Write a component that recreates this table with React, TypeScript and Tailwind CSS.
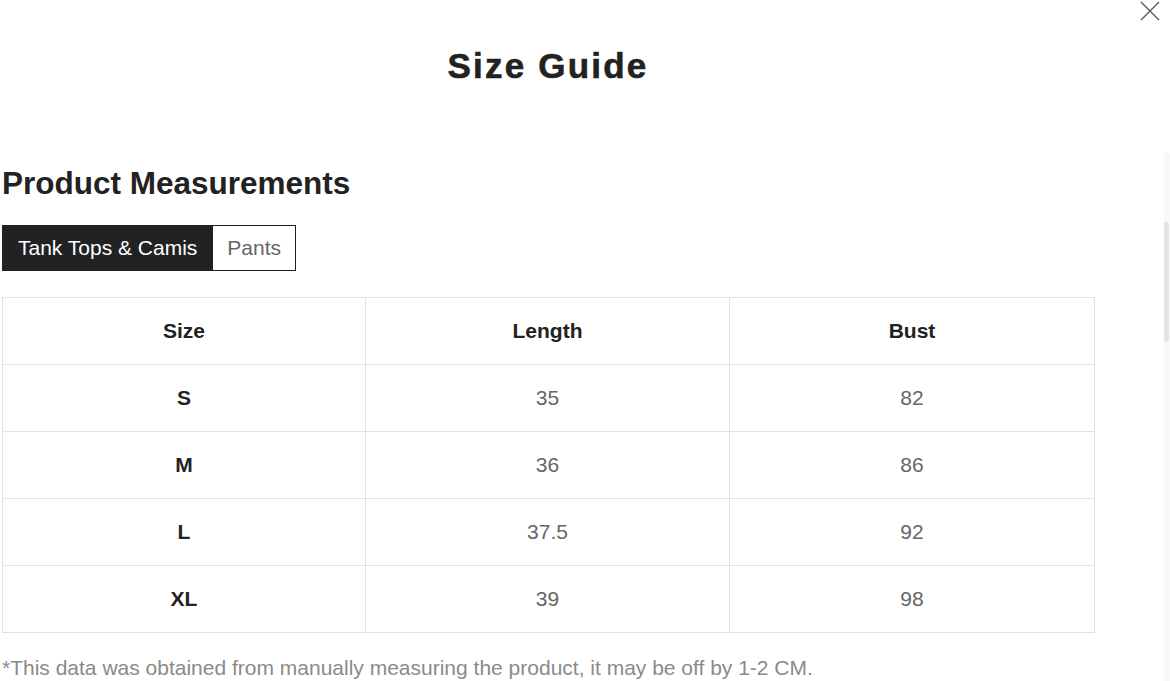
import React from "react";

const rows = [
  { size: "S", length: "35", bust: "82" },
  { size: "M", length: "36", bust: "86" },
  { size: "L", length: "37.5", bust: "92" },
  { size: "XL", length: "39", bust: "98" },
];

export default function App() {
  return (
    <div className="relative w-[1170px] h-[681px] overflow-hidden bg-white font-['Liberation_Sans',Arial,sans-serif]">
      {/* close button */}
      <button className="absolute left-[1139px] top-0 w-[22px] h-[22px] flex items-center justify-center">
        <svg width="22" height="22" viewBox="0 0 22 22" fill="none" stroke="#5a5a5a" strokeWidth="1.4">
          <path d="M2 2 L20 20 M20 2 L2 20" />
        </svg>
      </button>

      {/* scrollbar */}
      <div className="absolute left-[1164px] top-[153px] w-[6px] h-[528px] bg-[#f8f8f8]">
        <div className="mt-[69px] w-[5px] h-[120px] rounded-[3px] bg-[#e3e3e3]" />
      </div>

      <div className="w-[1092px] ml-[2px] flex flex-col">
        <h1 className="mt-[46px] text-center text-[35px] leading-[40px] font-black tracking-[2.2px] text-[#222] [-webkit-text-stroke:0.6px_#222]">
          Size Guide
        </h1>

        <h2 className="mt-[79px] text-[31.5px] leading-[36px] font-bold text-[#222]">
          Product Measurements
        </h2>

        <div className="mt-[24px] flex">
          <button className="h-[46px] pl-[15px] pr-[14px] bg-[#222] text-white text-[21px] leading-[44px] border border-[#222]">
            Tank Tops &amp; Camis
          </button>
          <button className="h-[46px] pl-[14px] pr-[14px] bg-white text-[#666] text-[21px] leading-[44px] border border-[#222]">
            Pants
          </button>
        </div>

        <div className="mt-[26px] grid grid-cols-[363px_364px_365px] border-l border-t border-[#e2e2e2] w-[1093px]">
          {["Size", "Length", "Bust"].map((h) => (
            <div
              key={h}
              className="h-[67px] flex items-center justify-center border-r border-b border-[#e2e2e2] text-[21px] font-bold text-[#222]"
            >
              {h}
            </div>
          ))}
          {rows.map((r) => (
            <React.Fragment key={r.size}>
              <div className="h-[67px] flex items-center justify-center border-r border-b border-[#e2e2e2] text-[21px] font-bold text-[#222]">
                {r.size}
              </div>
              <div className="h-[67px] flex items-center justify-center border-r border-b border-[#e2e2e2] text-[21px] text-[#666]">
                {r.length}
              </div>
              <div className="h-[67px] flex items-center justify-center border-r border-b border-[#e2e2e2] text-[21px] text-[#666]">
                {r.bust}
              </div>
            </React.Fragment>
          ))}
        </div>

        <p className="mt-[23px] text-[21px] leading-[24px] text-[#8a8a8a]">
          *This data was obtained from manually measuring the product, it may be off by 1-2 CM.
        </p>
      </div>
    </div>
  );
}
